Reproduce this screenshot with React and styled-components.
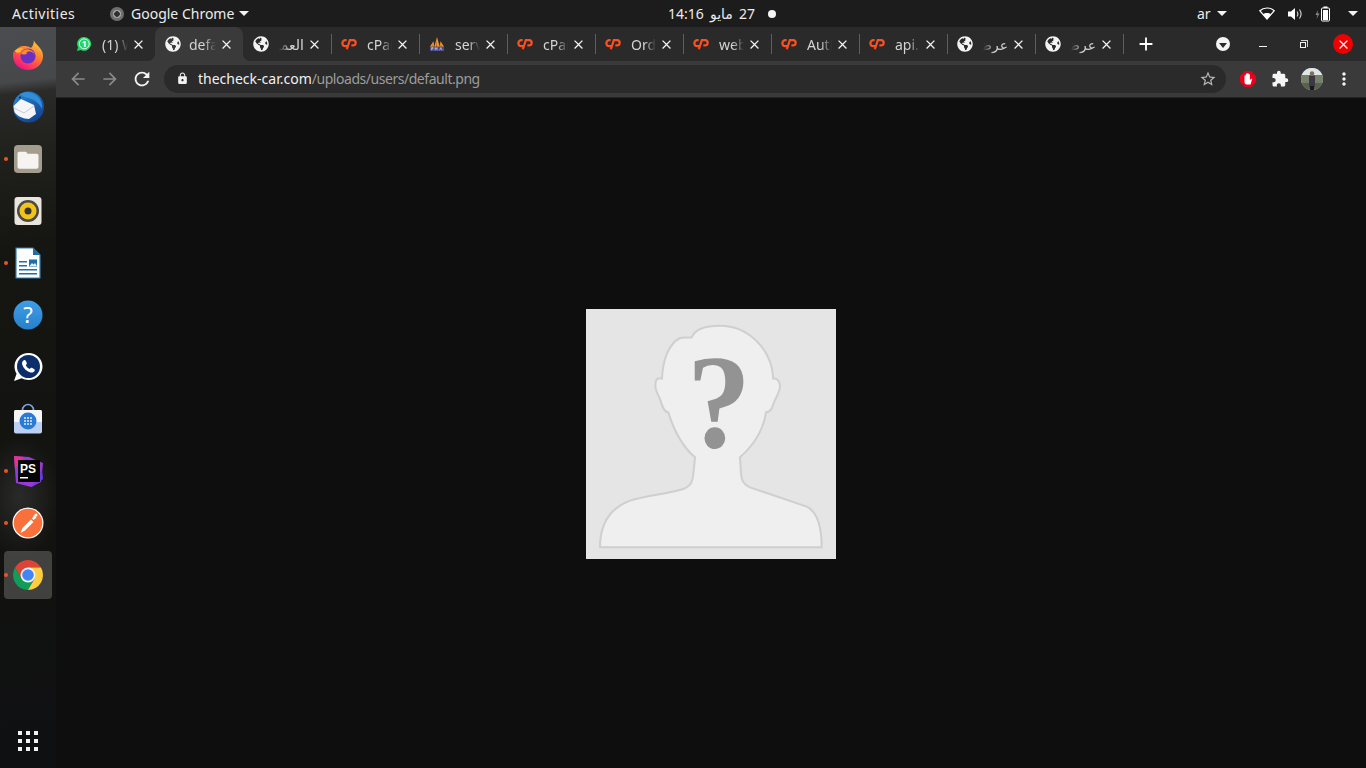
import React from 'react'
import styled, { createGlobalStyle } from 'styled-components'
import { FaGlobeAmericas } from 'react-icons/fa'
import { MdArrowBack, MdArrowForward, MdRefresh, MdLock, MdExtension, MdClose, MdAdd, MdStarBorder, MdMoreVert } from 'react-icons/md'

const tabs = [
  { icon: 'whatsapp', title: '(1) WhatsApp', first: true },
  { icon: 'globe', title: 'default.png', active: true },
  { icon: 'globe', title: 'العميل', rtl: true, sep: true },
  { icon: 'cpanel', title: 'cPanel', sep: true },
  { icon: 'pma', title: 'server', sep: true },
  { icon: 'cpanel', title: 'cPanel', sep: true },
  { icon: 'cpanel', title: 'Orders', sep: true },
  { icon: 'cpanel', title: 'webmail', sep: true },
  { icon: 'cpanel', title: 'Auth', sep: true },
  { icon: 'cpanel', title: 'api.php', sep: true },
  { icon: 'globe', title: 'عرض', rtl: true, sep: true },
  { icon: 'globe', title: 'عرض', rtl: true, sep: true },
]

const GlobalStyle = createGlobalStyle`
  html, body {
    margin: 0;
    padding: 0;
    width: 1366px;
    height: 768px;
    overflow: hidden;
    background: #0e0e0e;
  }
  * { box-sizing: border-box; }
`

function Firefox() {
  return (
    <svg width="32" height="32" viewBox="0 0 32 32">
      <defs>
        <linearGradient id="ffBody" x1="0.85" y1="0.05" x2="0.3" y2="1">
          <stop offset="0" stopColor="#ffd23f" />
          <stop offset="0.45" stopColor="#ff7a2f" />
          <stop offset="0.8" stopColor="#ff3362" />
          <stop offset="1" stopColor="#e0148f" />
        </linearGradient>
      </defs>
      <path d="M21.500 0c.2 3 2.800 4.600 5 7.200C29.500 10.400 31 13.600 31 17c0 8-6.700 14-15 14S1 25 1 17c0-2 .4-4 1.200-5.500.3 1 .8 1.800 1.500 2.300.2-2.400 1.500-4.300 3.300-5.500 3.300-2 8.500-1.500 12 .6C21 7 22.500 3.500 21.500 0z" fill="url(#ffBody)" />
      <circle cx="16" cy="17" r="7.600" fill="#6b2fc4" />
      <path d="M9 15c1-3.500 4.500-5.500 8-4.500 3.500.8 6 3.800 6 7 0-3-3-5-6-5-2.500 0-3 1.500-2 2.500-2 .5-4 .5-6 0z" fill="#ff8a2b" />
      <path d="M2.500 12c2-2.500 6-4 9-2.500-1.500.8-2.500 2-3 3.500-1.500 1.200-4 1-6-1z" fill="#ffb43a" />
    </svg>
  )
}

function Thunderbird() {
  return (
    <svg width="32" height="34" viewBox="0 0 32 34">
      <defs>
        <linearGradient id="tbBody" x1="0.2" y1="0" x2="0.8" y2="1">
          <stop offset="0" stopColor="#2a86cf" />
          <stop offset="0.6" stopColor="#1a5aaa" />
          <stop offset="1" stopColor="#123f8c" />
        </linearGradient>
      </defs>
      <circle cx="16.500" cy="17" r="15.500" fill="url(#tbBody)" />
      <path d="M8 4c6-3 14-2 19 4 2.500 3 3.500 7 3 11-3-6-7-9-12-10.500C14 7.500 10 6.500 8 4z" fill="#2f8fd8" />
      <path d="M1.500 16L9 9l13 6 2 9-7 5c-6 0-12-3-14.500-7z" fill="#f5f5f7" />
      <path d="M2 18l10 5 10-7" fill="none" stroke="#c5cbd6" strokeWidth="1" />
      <circle cx="8" cy="7.500" r="1.100" fill="#10284f" />
    </svg>
  )
}

function Files() {
  return (
    <svg width="30" height="30" viewBox="0 0 30 30">
      <rect x="1" y="1" width="28" height="28" rx="4" fill="#a49c8c" />
      <path d="M4.500 9.500c0-1 .8-1.700 1.800-1.700h6c.8 0 1.300.4 1.700 1.100l.5.900h9.200c1 0 1.800.8 1.800 1.800v10.800c0 1.400-1 2.400-2.400 2.400H6.900c-1.400 0-2.400-1-2.400-2.400z" fill="#f6f4f1" />
    </svg>
  )
}

function Rhythmbox() {
  return (
    <svg width="30" height="30" viewBox="0 0 30 30">
      <rect x="1.500" y="1" width="27" height="28" rx="3" fill="#e9e5dc" />
      <circle cx="15" cy="15" r="11" fill="#4a4943" />
      <circle cx="15" cy="15" r="8.500" fill="#f2c31b" />
      <circle cx="15" cy="15" r="3.500" fill="#35342f" />
    </svg>
  )
}

function Writer() {
  return (
    <svg width="26" height="32" viewBox="0 0 26 32">
      <path d="M1 1h17l7 7v23H1z" fill="#fdfdfd" stroke="#2f7fb8" strokeWidth="1.200" />
      <path d="M18 1l7 7h-7z" fill="#1f6ea8" />
      <path d="M4 14h8v1.500H4zM4 18h8v1.500H4zM4 22h18v1.500H4zM4 26h18v1.500H4z" fill="#1f6ea8" />
      <rect x="14" y="12.500" width="8" height="7" fill="#1f6ea8" />
      <path d="M14.500 19l2.500-3 1.500 1.500 1.500-1.500 2 3z" fill="#e3f0f8" />
    </svg>
  )
}

function Help() {
  return (
    <svg width="30" height="30" viewBox="0 0 30 30">
      <defs>
        <linearGradient id="helpBody" x1="0" y1="0" x2="0" y2="1">
          <stop offset="0" stopColor="#3f9ee6" />
          <stop offset="1" stopColor="#2680cb" />
        </linearGradient>
      </defs>
      <circle cx="15" cy="15" r="14.500" fill="url(#helpBody)" />
      <text x="15" y="23" textAnchor="middle" fontFamily="'Noto Sans', sans-serif" fontSize="22" fill="#ffffff">?</text>
    </svg>
  )
}

function DockWhatsapp() {
  return (
    <svg width="32" height="32" viewBox="0 0 32 32">
      <path d="M16.500 2C24.500 2 30.500 8 30.500 15.500S24.500 29 16.500 29c-2.500 0-4.800-.6-6.800-1.700L2 30l2.600-7.200C3.300 20.700 2.500 18.200 2.500 15.500 2.500 8 8.500 2 16.500 2z" fill="#ffffff" />
      <circle cx="16.500" cy="15.500" r="11.500" fill="#0c2f6b" />
      <path d="M11.500 9.500c.8-.7 1.800-.5 2.200.3l1 2c.3.600.1 1.200-.3 1.600l-.7.700c.8 1.800 2.200 3.200 4 4l.8-.8c.4-.4 1-.6 1.600-.3l2 1c.8.400 1 1.400.3 2.200-1 1.200-2.500 1.700-4 1.200-4-1.300-7-4.300-8.200-8-.4-1.400 0-3 1.300-3.900z" fill="#ffffff" />
    </svg>
  )
}

function SoftwareStore() {
  return (
    <svg width="30" height="32" viewBox="0 0 30 32">
      <path d="M9.500 10V7c0-3 2.500-5.500 5.500-5.500S20.500 4 20.500 7v3" fill="none" stroke="#7ea6dd" strokeWidth="1.600" />
      <path d="M1 8.500c0-.8.700-1.500 1.500-1.500h25c.8 0 1.500.7 1.500 1.500V19H1z" fill="#f6f6f6" />
      <path d="M1 19h28v9.500c0 1.100-.9 2-2 2H3c-1.100 0-2-.9-2-2z" fill="#bcd0f5" />
      <circle cx="15" cy="18" r="8.500" fill="#2b7bd6" />
      <g fill="#ffffff">
        {[12, 15, 18].map(x => [15, 18, 21].map(y => <rect key={`${x}-${y}`} x={x - 0.8} y={y - 0.8} width="1.600" height="1.600" />))}
      </g>
    </svg>
  )
}

function PhpStorm() {
  return (
    <svg width="34" height="34" viewBox="0 0 34 34">
      <path d="M3 2l15 1 14 6-2 19-10 5-15-4z" fill="#9a3ad6" />
      <path d="M3 2l10 1-9 12z" fill="#e3348d" />
      <path d="M21 33l11-8-1-10z" fill="#6b3be0" />
      <rect x="7" y="6" width="22" height="22" fill="#050505" />
      <text x="9" y="18.500" fontFamily="'Liberation Sans', sans-serif" fontWeight="700" fontSize="12" fill="#ffffff">PS</text>
      <rect x="9" y="23" width="8" height="1.500" fill="#ffffff" />
    </svg>
  )
}

function Postman() {
  return (
    <svg width="32" height="32" viewBox="0 0 32 32">
      <circle cx="16" cy="16" r="15.500" fill="#fdfdfd" />
      <circle cx="16" cy="16" r="14.300" fill="#f9703a" />
      <path d="M8.500 26l2-5 8.500-8.500 2.500 2.500-8.500 8.500z" fill="#ffffff" />
      <path d="M20 11.500l2-3.500 2.500 2.500-3 2.500z" fill="#ffffff" />
      <circle cx="24" cy="8" r="1.500" fill="#ffffff" />
    </svg>
  )
}

function Chrome({ size = 32 }) {
  return (
    <svg width={size} height={size} viewBox="0 0 32 32">
      <path d="M3.010 8.500A15 15 0 0 1 28.990 8.500H16L9.500 19.750Z" fill="#db4437" />
      <path d="M3.010 8.500A15 15 0 0 0 16 31L22.500 19.750H9.500Z" fill="#0f9d58" />
      <path d="M16 31A15 15 0 0 0 28.990 8.500H16L22.500 19.750Z" fill="#ffcd40" />
      <circle cx="16" cy="16" r="7.500" fill="#f1f3f4" />
      <circle cx="16" cy="16" r="5.800" fill="#4285f4" />
    </svg>
  )
}

function PmaIcon() {
  return (
    <svg width="18" height="18" viewBox="0 0 18 18">
      <path d="M1 12L5 6l1 6zM6 12l3-11 3 11zM12 12l1-6 4 6z" fill="#f29a2e" />
      <path d="M8.500 4L9 12h-1zM4.500 8l.5 4H4zM13.500 8l.5 4h-1z" fill="#a9501a" />
      <rect x="1" y="12" width="16" height="5" rx="1" fill="#4a4f8c" />
      <path d="M3 16v-3h1.500v1.500H3M7 16v-3l1 1.500 1-1.500v3M12 16l1.300-3 1.300 3" fill="none" stroke="#d9dbf2" strokeWidth="0.700" />
    </svg>
  )
}

function CpanelIcon() {
  return (
    <svg width="17" height="12" viewBox="0 0 17 12">
      <path d="M6 1.900H4.700a3.200 3.200 0 0 0 0 6.400H7.300" fill="none" stroke="#ff4f1f" strokeWidth="2.300" />
      <path d="M6.200 11.600L9.400 1.900h3.400a2.800 2.800 0 0 1 0 5.600H11" fill="none" stroke="#ff4f1f" strokeWidth="2.300" />
    </svg>
  )
}

function WhatsappFavicon() {
  return (
    <svg width="18" height="18" viewBox="0 0 18 18">
      <path d="M9.200 1a7.800 7.800 0 1 1-3.700 14.700L1 17l1.300-4.300A7.800 7.800 0 0 1 9.200 1z" fill="#25d366" />
      <circle cx="9.300" cy="8.800" r="5.600" fill="#25d366" stroke="#ffffff" strokeWidth="1" />
      <text x="9.300" y="12.300" textAnchor="middle" fontFamily="'Noto Sans', sans-serif" fontWeight="700" fontSize="10" fill="#ffffff">1</text>
    </svg>
  )
}

function TabIcon({ icon }) {
  if (icon === 'whatsapp') return <WhatsappFavicon />
  if (icon === 'cpanel') return <CpanelIcon />
  if (icon === 'pma') return <PmaIcon />
  return <FaGlobeAmericas size={16} color="#f4f4f4" />
}

function WifiIcon() {
  return (
    <svg width="16" height="13" viewBox="0 0 16 13">
      <path d="M8 12L.8 3.700C2.800 1.900 5.300 1 8 1s5.200.9 7.200 2.700z" fill="none" stroke="#fff" strokeWidth="1.200" />
      <path d="M8 12L4 7.300C5.100 6.500 6.500 6 8 6s2.900.5 4 1.300z" fill="#fff" />
    </svg>
  )
}

function VolumeIcon() {
  return (
    <svg width="16" height="14" viewBox="0 0 16 14">
      <path d="M1 4.500h3L8 1v12L4 9.500H1z" fill="#fff" />
      <path d="M10 4.500c1 1.400 1 3.600 0 5M12.500 2.500c1.800 2.600 1.800 6.400 0 9" fill="none" stroke="#d8d8d8" strokeWidth="1.100" />
    </svg>
  )
}

function BatteryIcon() {
  return (
    <svg width="16" height="16" viewBox="0 0 16 16">
      <path d="M3 4L.5 9h2L1.500 13 4.500 7.500h-2z" fill="#8b8b8b" />
      <rect x="6.500" y="2" width="8" height="13" rx="1" fill="none" stroke="#fff" strokeWidth="1" />
      <rect x="8.500" y="0.500" width="4" height="1.500" fill="#fff" />
      <rect x="8" y="4" width="5" height="10" fill="#fff" />
    </svg>
  )
}

function StopHand() {
  return (
    <svg width="16" height="16" viewBox="0 0 16 16">
      <path d="M5 0h6l5 5v6l-5 5H5l-5-5V5z" fill="#e8001c" />
      <path d="M4.500 7.500V5c0-1 1.300-1 1.300 0v2V3.200c0-1 1.400-1 1.400 0V7V2.800c0-1 1.400-1 1.400 0V7V3.800c0-1 1.300-1 1.300 0v5.400l1-1.200c.7-.8 1.700-.1 1.100.8L10.500 13.500H6.800c-1.400 0-2.300-1-2.300-2.500z" fill="#fff" />
    </svg>
  )
}

function Avatar() {
  return (
    <svg width="22" height="22" viewBox="0 0 22 22">
      <defs>
        <clipPath id="avatarClip"><circle cx="11" cy="11" r="11" /></clipPath>
      </defs>
      <g clipPath="url(#avatarClip)">
        <rect width="22" height="22" fill="#c3cdb9" />
        <rect width="22" height="7" fill="#dfe6ea" />
        <rect y="7" width="22" height="8" fill="#77806b" />
        <rect y="15" width="22" height="7" fill="#59604f" />
        <rect x="8" y="7.500" width="6" height="11" fill="#3a3944" />
        <circle cx="11" cy="5.500" r="2.200" fill="#8a6a55" />
        <rect x="9" y="18" width="4" height="4" fill="#17171c" />
      </g>
    </svg>
  )
}

function Silhouette() {
  return (
    <svg width="250" height="250" viewBox="18 15 750 750">
      <rect x="18" y="15" width="750" height="750" fill="#e5e5e5" />
      <path
        d="M60 730C60 690 70 620 150 590C200 575 260 570 310 555C335 545 338 530 340 510L345 460C310 430 285 390 265 325C250 325 245 300 240 285C230 265 222 250 228 230C232 222 240 222 246 224C248 170 265 120 300 102C315 98 325 102 335 100C345 75 380 65 420 65C500 65 575 130 580 224C590 222 597 228 600 245C600 265 585 285 580 300C575 320 565 325 558 325C550 380 520 425 480 460L483 510C485 530 490 540 510 550L680 608C715 625 725 680 725 730Z"
        fill="#efefef"
        stroke="#cfcfcf"
        strokeWidth="6"
      />
      <text transform="translate(417 428) scale(0.96 1)" textAnchor="middle" fontFamily="'Liberation Serif', serif" fontWeight="700" fontSize="400" fill="#939393">?</text>
    </svg>
  )
}

const dockItems = [
  { key: 'firefox', node: <Firefox /> },
  { key: 'thunderbird', node: <Thunderbird /> },
  { key: 'files', node: <Files />, running: true },
  { key: 'rhythmbox', node: <Rhythmbox /> },
  { key: 'writer', node: <Writer />, running: true },
  { key: 'help', node: <Help /> },
  { key: 'whatsapp', node: <DockWhatsapp /> },
  { key: 'store', node: <SoftwareStore /> },
  { key: 'phpstorm', node: <PhpStorm />, running: true },
  { key: 'postman', node: <Postman />, running: true },
  { key: 'chrome', node: <Chrome />, running: true, focused: true },
]

export default function App() {
  return (
    <Screen>
      <GlobalStyle />
      <TopBar>
        <Activities>Activities</Activities>
        <AppMenu>
          <AppGlyph />
          Google Chrome
          <Caret />
        </AppMenu>
        <Clock>
          <ClockText dir="rtl">27 مايو 14:16</ClockText>
          <ClockDot />
        </Clock>
        <Tray>
          <Lang>ar</Lang>
          <Caret />
          <TrayIcons>
            <WifiIcon />
            <VolumeIcon />
            <BatteryIcon />
            <Caret />
          </TrayIcons>
        </Tray>
      </TopBar>
      <Desktop>
        <Dock>
          {dockItems.map(item => (
            <DockItem key={item.key} $focused={item.focused}>
              {item.running && <RunDot />}
              {item.node}
            </DockItem>
          ))}
          <ShowApps>
            {Array.from({ length: 9 }).map((_, i) => <AppsDot key={i} />)}
          </ShowApps>
        </Dock>
        <Browser>
          <TabStrip>
            {tabs.map((tab, i) => (
              <Tab key={i} $active={tab.active} $first={tab.first} $sep={tab.sep}>
                <FavSlot $active={tab.active}><TabIcon icon={tab.icon} /></FavSlot>
                <TabTitle $rtl={tab.rtl} dir={tab.rtl ? 'rtl' : 'ltr'}>{tab.title}</TabTitle>
                <MdClose size={15} color="#f2f2f2" />
              </Tab>
            ))}
            <NewTab><MdAdd size={22} color="#ffffff" /></NewTab>
            <WindowControls>
              <WindowButton><TabSearch /></WindowButton>
              <WindowButton><MinimizeBar /></WindowButton>
              <WindowButton><RestoreBox /></WindowButton>
              <WindowButton><CloseDisc><MdClose size={15} color="#ffffff" /></CloseDisc></WindowButton>
            </WindowControls>
          </TabStrip>
          <Toolbar>
            <ToolButton><MdArrowBack size={20} color="#8a8a8a" /></ToolButton>
            <ToolButton><MdArrowForward size={20} color="#8a8a8a" /></ToolButton>
            <ToolButton><MdRefresh size={22} color="#f5f5f5" /></ToolButton>
            <Omnibox>
              <MdLock size={13} color="#f0f0f0" />
              <Url>thecheck-car.com<UrlPath>/uploads/users/default.png</UrlPath></Url>
              <MdStarBorder size={18} color="#b8b8b8" />
            </Omnibox>
            <ToolButton><StopHand /></ToolButton>
            <ToolButton><MdExtension size={18} color="#f5f5f5" /></ToolButton>
            <ToolButton><Avatar /></ToolButton>
            <ToolButton><MdMoreVert size={20} color="#f5f5f5" /></ToolButton>
          </Toolbar>
          <Viewport>
            <Silhouette />
          </Viewport>
        </Browser>
      </Desktop>
    </Screen>
  )
}

const Screen = styled.div`
  width: 1366px;
  height: 768px;
  display: flex;
  flex-direction: column;
  font-family: "Noto Sans", "DejaVu Sans", sans-serif;
  background: #0e0e0e;
  overflow: hidden;
`

const TopBar = styled.div`
  height: 27px;
  flex: none;
  display: flex;
  align-items: center;
  background: #1c1c1c;
  color: #ececec;
  font-size: 14px;
`

const Activities = styled.div`
  width: 110px;
  padding-left: 12px;
  letter-spacing: 0.5px;
`

const AppMenu = styled.div`
  width: 558px;
  display: flex;
  align-items: center;
`

const AppGlyph = styled.span`
  width: 14px;
  height: 14px;
  margin-right: 7px;
  border-radius: 50%;
  background: radial-gradient(circle, #2e2e2e 0 2.500px, #a0a0a0 3px 4px, #6e6e6e 4.500px);
`

const Caret = styled.span`
  display: inline-block;
  width: 0;
  height: 0;
  margin-left: 5px;
  border-left: 5px solid transparent;
  border-right: 5px solid transparent;
  border-top: 5px solid #f2f2f2;
`

const Clock = styled.div`
  width: 529px;
  display: flex;
  align-items: center;
  gap: 13px;
`

const ClockText = styled.span`
  word-spacing: 2.500px;
`

const ClockDot = styled.span`
  width: 8px;
  height: 8px;
  border-radius: 50%;
  background: #f5f5f5;
`

const Tray = styled.div`
  flex: 1;
  display: flex;
  align-items: center;
`

const Lang = styled.span`
  margin-right: 1px;
`

const TrayIcons = styled.div`
  display: flex;
  align-items: center;
  gap: 12px;
  margin-left: 32px;
`

const Desktop = styled.div`
  flex: 1;
  display: flex;
  min-height: 0;
`

const Dock = styled.div`
  width: 56px;
  flex: none;
  display: flex;
  flex-direction: column;
  align-items: center;
  gap: 4px;
  padding: 4px 0 0;
  background:
    radial-gradient(ellipse 40px 60px at 20px 470px, #2a2a2a, transparent),
    linear-gradient(174deg, #4b4c4f 0, #47484a 56px, #2a2a28 68px, #21211e 120px, #151612 220px, #121210 520px, #0f1013 100%);
`

const DockItem = styled.div`
  position: relative;
  width: 48px;
  height: 48px;
  flex: none;
  display: flex;
  align-items: center;
  justify-content: center;
  border-radius: 4px;
  background: ${p => (p.$focused ? 'rgba(255, 255, 255, 0.2)' : 'transparent')};
`

const RunDot = styled.span`
  position: absolute;
  left: 0;
  top: 22px;
  width: 4px;
  height: 4px;
  border-radius: 50%;
  background: #e95420;
`

const ShowApps = styled.div`
  margin-top: auto;
  margin-bottom: 17px;
  display: grid;
  grid-template-columns: repeat(3, 4px);
  gap: 4px;
`

const AppsDot = styled.span`
  width: 4px;
  height: 4px;
  background: #f2f2f2;
`

const Browser = styled.div`
  flex: 1;
  min-width: 0;
  display: flex;
  flex-direction: column;
`

const TabStrip = styled.div`
  height: 34px;
  flex: none;
  display: flex;
  padding-left: 9px;
  background: #2a2a2a;
`

const Tab = styled.div`
  position: relative;
  width: ${p => (p.$first ? '90px' : '88px')};
  flex: none;
  display: flex;
  align-items: center;
  padding: 0 9px 0 ${p => (p.$first ? '11px' : '10px')};
  border-radius: 8px 8px 0 0;
  background: ${p => (p.$active ? '#3a3a3a' : 'transparent')};

  ${p => p.$sep && `
    &::after {
      content: '';
      position: absolute;
      right: -1px;
      top: 7px;
      width: 1px;
      height: 20px;
      background: #5f5f5f;
    }
  `}

  ${p => p.$active && `
    &::before, &::after {
      content: '';
      position: absolute;
      bottom: 0;
      width: 8px;
      height: 8px;
    }
    &::before {
      left: -8px;
      background: radial-gradient(circle at 0 0, transparent 8px, #3a3a3a 8.500px);
    }
    &::after {
      right: -8px;
      background: radial-gradient(circle at 100% 0, transparent 8px, #3a3a3a 8.500px);
    }
  `}
`

const FavSlot = styled.span`
  width: 16px;
  height: 18px;
  flex: none;
  margin-right: ${p => (p.$active ? '8px' : '10px')};
  display: flex;
  align-items: center;
  justify-content: center;
`

const TabTitle = styled.span`
  flex: 1;
  min-width: 0;
  margin-right: 3px;
  overflow: hidden;
  white-space: nowrap;
  color: #d4d4d4;
  font-size: 14px;
  ${p => p.$rtl
    ? 'mask-image: linear-gradient(to left, #000 55%, transparent 100%);'
    : 'mask-image: linear-gradient(to right, #000 55%, transparent 100%);'}
`

const NewTab = styled.div`
  width: 24px;
  margin-left: 11px;
  display: flex;
  align-items: center;
  justify-content: center;
`

const WindowControls = styled.div`
  margin-left: auto;
  padding-right: 3px;
  display: flex;
`

const WindowButton = styled.div`
  width: 40px;
  display: flex;
  align-items: center;
  justify-content: center;
`

const TabSearch = styled.span`
  width: 14px;
  height: 14px;
  border-radius: 50%;
  background: #f5f5f5;
  display: flex;
  align-items: center;
  justify-content: center;

  &::before {
    content: '';
    margin-top: 2px;
    border-left: 4px solid transparent;
    border-right: 4px solid transparent;
    border-top: 5px solid #2a2a2a;
  }
`

const MinimizeBar = styled.span`
  width: 8px;
  height: 1px;
  margin-top: 5px;
  background: #f2f2f2;
`

const RestoreBox = styled.span`
  position: relative;
  width: 6px;
  height: 6px;
  margin-top: 1px;
  border: 1px solid #f2f2f2;

  &::before {
    content: '';
    position: absolute;
    left: 0;
    top: -3px;
    width: 6px;
    height: 6px;
    border-top: 1px solid #d0d0d0;
    border-right: 1px solid #d0d0d0;
  }
`

const CloseDisc = styled.span`
  width: 20px;
  height: 20px;
  border-radius: 50%;
  background: #ee0000;
  display: flex;
  align-items: center;
  justify-content: center;
`

const Toolbar = styled.div`
  height: 37px;
  flex: none;
  display: flex;
  align-items: center;
  padding: 0 6px 1px;
  background: #3a3a3a;
  border-bottom: 1px solid #242424;
`

const ToolButton = styled.div`
  width: 32px;
  height: 28px;
  flex: none;
  display: flex;
  align-items: center;
  justify-content: center;
`

const Omnibox = styled.div`
  flex: 1;
  height: 28px;
  margin: 0 6px;
  display: flex;
  align-items: center;
  padding: 0 9px 0 12px;
  border-radius: 14px;
  background: #2a2a2a;
`

const Url = styled.div`
  flex: 1;
  margin-left: 9px;
  color: #f0f0f0;
  font-size: 14px;
  white-space: nowrap;
`

const UrlPath = styled.span`
  color: #9c9c9c;
  letter-spacing: -0.46px;
`

const Viewport = styled.div`
  flex: 1;
  display: flex;
  align-items: center;
  justify-content: center;
  padding-top: 2px;
  background: #0e0e0e;
`
